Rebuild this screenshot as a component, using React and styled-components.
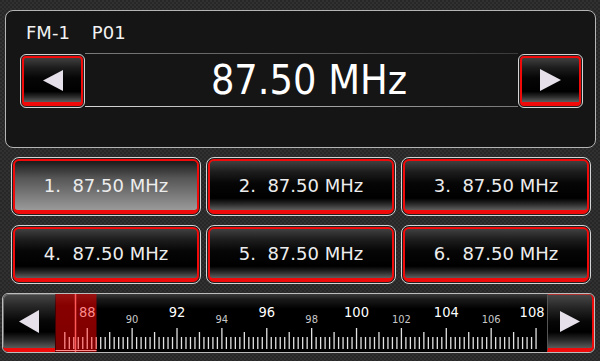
import React from "react";
import styled, { createGlobalStyle } from "styled-components";

const Global = createGlobalStyle`
  html, body { margin: 0; padding: 0; }
  body { background: #2a2a2a; font-family: "DejaVu Sans", sans-serif; }
`;

const Screen = styled.div`
  width: 600px;
  height: 361px;
  box-sizing: border-box;
  padding-top: 10px;
  display: flex;
  flex-direction: column;
  overflow: hidden;
  background: repeating-conic-gradient(#313131 0 25%, #272727 0 50%) 0 0 / 4px 4px;
`;

const TunerPanel = styled.section`
  margin: 0 4px 0 5px;
  height: 138px;
  box-sizing: border-box;
  border: 1px solid #b4b4b4;
  border-radius: 8px;
  background: #151515;
  padding: 11px 12px 0 14px;
  display: flex;
  flex-direction: column;
`;

const Header = styled.div`
  display: flex;
  gap: 22px;
  color: #f2f2f2;
  font-size: 18px;
  line-height: 21px;
  padding-left: 6px;
  margin-bottom: 11px;
`;

const TuneRow = styled.div`
  display: flex;
  height: 54px;
`;

const Frame = styled.div`
  box-sizing: border-box;
  border: 1px solid #d4d4d4;
  border-radius: ${(p) => p.$r}px;
  padding: 1px;
  background: #202020;
  display: flex;
  ${(p) => (p.$w ? `width: ${p.$w}px; flex: none;` : "")}
`;

const Face = styled.button`
  flex: 1;
  margin: 0;
  padding: 0;
  box-sizing: border-box;
  border: 2px solid #f00a0a;
  border-bottom-width: 4px;
  border-radius: ${(p) => p.$r}px;
  display: flex;
  align-items: center;
  justify-content: center;
  color: #ededed;
  font-family: "DejaVu Sans", sans-serif;
  font-size: 18px;
  white-space: pre;
  cursor: pointer;
  background: ${(p) =>
    p.$active
      ? "linear-gradient(180deg, #1a1a1a 0%, #2c2c2c 10%, #565656 35%, #7a7a7a 70%, #9a9a9a 100%)"
      : "linear-gradient(180deg, #404040 0%, #1d1d1d 22%, #060606 45%, #000 76%, #2a2a2a 88%, #5e5e5e 100%)"};
`;

const Display = styled.div`
  flex: 1;
  margin-top: -1px;
  height: 54px;
  box-sizing: border-box;
  padding-left: 15px;
  display: flex;
  align-items: center;
  justify-content: center;
  color: #ffffff;
  font-family: "DejaVu Sans Condensed", "DejaVu Sans", sans-serif;
  font-size: 41px;
  background:
    linear-gradient(90deg, #7a7a7a, #5a5a5a 50%, #3a3a3a) top / 100% 1px no-repeat,
    linear-gradient(90deg, #d6d6d6, #aaaaaa 50%, #777777) bottom / 100% 1px no-repeat;
`;

const Presets = styled.div`
  display: grid;
  grid-template-columns: repeat(3, 190px);
  grid-auto-rows: 59px;
  column-gap: 5px;
  row-gap: 9px;
  margin: 9px 0 0 11px;
`;

const Dial = styled.div`
  margin: 9px 0 0 2px;
  width: 593px;
  height: 60px;
  box-sizing: border-box;
  border: 1px solid #bcbcbc;
  border-radius: 6px;
  overflow: hidden;
  display: grid;
  grid-template-columns: 52px 1fr 47px;
`;

const DialButton = styled.button`
  margin: 0;
  padding: 0;
  box-sizing: border-box;
  border: 0;
  border-bottom: 4px solid #f00a0a;
  ${(p) =>
    p.$side === "right"
      ? "border-right: 2px solid #f00a0a; border-top: 1px solid #b03030; border-left: 1px solid #555; border-radius: 0 5px 5px 0;"
      : "border-radius: 5px 0 0 5px; box-shadow: inset 1px 1px 0 #6a6a6a;"}
  display: flex;
  align-items: center;
  justify-content: center;
  cursor: pointer;
  background: linear-gradient(180deg, #474747 0%, #242424 25%, #070707 50%, #000 70%, #2c2c2c 86%, #5a5a5a 100%);
`;

const Scale = styled.div`
  background: linear-gradient(180deg, #3a3a3a 0%, #1a1a1a 9%, #000 26%);
  svg { display: block; }
`;

const Tri = ({ dir, w, h }) => (
  <svg width={w} height={h} viewBox={`0 0 ${w} ${h}`}>
    <polygon
      points={dir === "left" ? `0,${h / 2} ${w},0 ${w},${h}` : `0,0 ${w},${h / 2} 0,${h}`}
      fill="#e6e0ea"
    />
  </svg>
);

const X0 = 55;
const fx = (f) => 87.25 + (f - 88) * 22.44 - X0;
const RED_L = 0.5;
const RED_R = 41.5;

function ScaleSvg() {
  const ticks = [];
  for (let i = 0; i <= 105; i++) {
    const f = Math.round((87 + i * 0.2) * 10) / 10;
    const x = fx(f);
    const isInt = Math.abs(f - Math.round(f)) < 0.01;
    let top = 43;
    if (isInt) top = Math.round(f) % 2 === 0 ? 34 : 38;
    const inRed = x >= RED_L && x <= RED_R;
    ticks.push(
      <line key={i} x1={x} x2={x} y1={top} y2={55} stroke={inRed ? "#ff8a8a" : "#e2e2e2"} strokeWidth="1.3" />
    );
  }
  const labels = [];
  for (let f = 88; f <= 108; f += 2) {
    const big = (f - 88) % 4 === 0;
    labels.push(
      <text
        key={f}
        x={f === 108 ? fx(f) - 4 : fx(f)}
        y={big ? 23 : 29}
        textAnchor="middle"
        fontFamily='"DejaVu Sans Condensed", "DejaVu Sans", sans-serif'
        fontSize={big ? 14.5 : 11}
        fill={f === 88 ? "#ff8c8c" : big ? "#ffffff" : "#c8c8c8"}
      >
        {f}
      </text>
    );
  }
  return (
    <svg width="492" height="58" viewBox="0 0 492 58">
      <defs>
        <linearGradient id="redzone" x1="0" y1="0" x2="0" y2="1">
          <stop offset="0" stopColor="#9a1212" />
          <stop offset="0.2" stopColor="#860000" />
          <stop offset="1" stopColor="#800000" />
        </linearGradient>
      </defs>
      <rect x={RED_L} y="0" width={RED_R - RED_L} height="58" fill="url(#redzone)" />
      {ticks}
      {labels}
      <line x1="20.5" x2="20.5" y1="0" y2="58" stroke="#ff5a5a" strokeWidth="1.5" />
      <line x1={RED_L} x2={RED_R} y1="56.5" y2="56.5" stroke="#ff8c8c" strokeWidth="1" />
    </svg>
  );
}

const presets = [1, 2, 3, 4, 5, 6];

export default function App() {
  return (
    <>
      <Global />
      <Screen>
        <TunerPanel>
          <Header>
            <span>FM-1</span>
            <span>P01</span>
          </Header>
          <TuneRow>
            <Frame $r={6} $w={65}>
              <Face $r={4}>
                <Tri dir="left" w={20} h={21} />
              </Face>
            </Frame>
            <Display>87.50 MHz</Display>
            <Frame $r={6} $w={65}>
              <Face $r={4}>
                <Tri dir="right" w={21} h={22} />
              </Face>
            </Frame>
          </TuneRow>
        </TunerPanel>
        <Presets>
          {presets.map((n) => (
            <Frame key={n} $r={8}>
              <Face $r={6} $active={n === 1}>
                {`${n}.  87.50 MHz`}
              </Face>
            </Frame>
          ))}
        </Presets>
        <Dial>
          <DialButton $side="left">
            <Tri dir="left" w={20} h={23} />
          </DialButton>
          <Scale>
            <ScaleSvg />
          </Scale>
          <DialButton $side="right">
            <Tri dir="right" w={20} h={21} />
          </DialButton>
        </Dial>
      </Screen>
    </>
  );
}
